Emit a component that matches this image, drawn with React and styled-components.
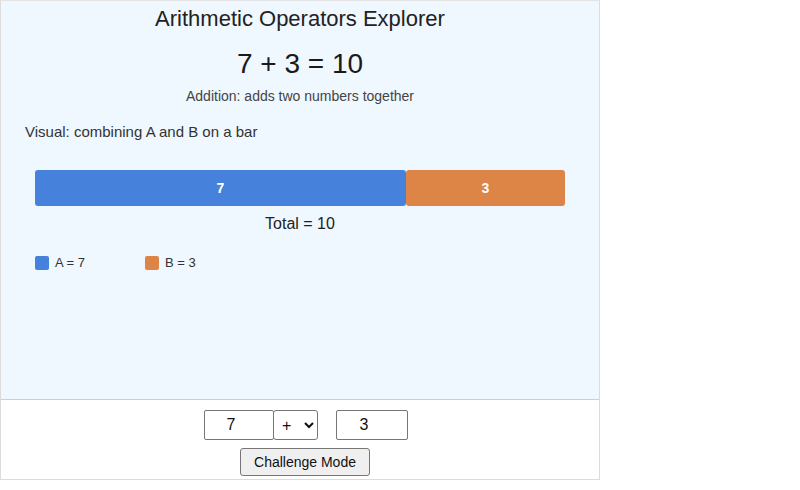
import React, { useState } from "react";
import styled, { createGlobalStyle } from "styled-components";

const Global = createGlobalStyle`
  html, body { margin: 0; padding: 0; background: #ffffff; }
  body { font-family: "Liberation Sans", Arial, Helvetica, sans-serif; color: #222; }
  * { box-sizing: border-box; }
`;

const Frame = styled.div`
  width: 600px;
  border: 1px solid #dcdcdc;
  border-top-color: #e4e4e4;
  display: flex;
  flex-direction: column;
`;

const Stage = styled.div`
  height: 399px;
  background: #eff7ff;
  border-bottom: 1px solid #cfcfcf;
  display: flex;
  flex-direction: column;
`;

const Title = styled.div`
  margin-top: 5px;
  font-size: 22px;
  line-height: 26px;
  text-align: center;
  color: #222;
`;

const Equation = styled.div`
  margin-top: 16px;
  font-size: 28px;
  line-height: 32px;
  text-align: center;
  color: #1a1a1a;
`;

const Description = styled.div`
  margin-top: 7px;
  font-size: 14px;
  line-height: 18px;
  text-align: center;
  color: #444;
`;

const Caption = styled.div`
  margin-top: 18px;
  padding-left: 24px;
  font-size: 15px;
  line-height: 18px;
  color: #333;
`;

const Bar = styled.div`
  margin: 29px 0 0 34px;
  width: 530px;
  height: 36px;
  display: flex;
`;

const Segment = styled.div`
  height: 100%;
  background: ${(p) => p.$color};
  border-radius: 3px;
  display: flex;
  align-items: center;
  justify-content: center;
  color: #fff;
  font-weight: bold;
  font-size: 14px;
`;

const Total = styled.div`
  margin-top: 8px;
  font-size: 16px;
  line-height: 20px;
  text-align: center;
  color: #222;
`;

const Legend = styled.div`
  margin: 22px 0 0 34px;
  display: flex;
`;

const LegendItem = styled.div`
  width: 110px;
  display: flex;
  align-items: center;
  gap: 6px;
  font-size: 13px;
  line-height: 14px;
  color: #333;
`;

const Swatch = styled.span`
  width: 14px;
  height: 14px;
  border-radius: 2px;
  background: ${(p) => p.$color};
`;

const Controls = styled.div`
  display: flex;
  flex-direction: column;
  align-items: center;
  gap: 8px;
  padding: 10px 0 3px 10px;
`;

const InputRow = styled.div`
  display: flex;
  align-items: center;
  margin-left: 2px;
`;

const NumberInput = styled.input`
  width: ${(p) => p.$w}px;
  height: 30px;
  border: 1px solid #767676;
  border-radius: 2px;
  background: #fff;
  font-family: "Liberation Sans", Arial, sans-serif;
  font-size: 16px;
  text-align: center;
  color: #111;
  padding: 0 18px 0 2px;
  margin: 0;
`;

const OpSelect = styled.select`
  width: 45px;
  height: 30px;
  margin: 0 18px 0 -1px;
  border: 1px solid #767676;
  border-radius: 3px;
  background: #fff;
  font-family: "Liberation Sans", Arial, sans-serif;
  font-size: 16px;
  color: #111;
  padding: 0 0 0 4px;
`;

const Button = styled.button`
  width: 130px;
  height: 28px;
  border: 1px solid #767676;
  border-radius: 3px;
  background: #efefef;
  font-family: "Liberation Sans", Arial, sans-serif;
  font-size: 14px;
  color: #111;
  padding: 0;
`;

export default function App() {
  const [a, setA] = useState("7");
  const [b, setB] = useState("3");
  const [op, setOp] = useState("+");
  const av = Number(a) || 0;
  const bv = Number(b) || 0;
  const total = av + bv;
  const wa = total ? (av / total) * 530 : 265;
  return (
    <>
      <Global />
      <Frame>
        <Stage>
          <Title>Arithmetic Operators Explorer</Title>
          <Equation>
            {av} {op} {bv} = {total}
          </Equation>
          <Description>Addition: adds two numbers together</Description>
          <Caption>Visual: combining A and B on a bar</Caption>
          <Bar>
            <Segment $color="#4682dc" style={{ width: wa }}>{av}</Segment>
            <Segment $color="#dd8447" style={{ width: 530 - wa }}>{bv}</Segment>
          </Bar>
          <Total>Total = {total}</Total>
          <Legend>
            <LegendItem>
              <Swatch $color="#4682dc" />A = {av}
            </LegendItem>
            <LegendItem>
              <Swatch $color="#dd8447" />B = {bv}
            </LegendItem>
          </Legend>
        </Stage>
        <Controls>
          <InputRow>
            <NumberInput $w={70} value={a} onChange={(e) => setA(e.target.value)} />
            <OpSelect value={op} onChange={(e) => setOp(e.target.value)}>
              <option>+</option>
              <option>-</option>
              <option>×</option>
              <option>÷</option>
            </OpSelect>
            <NumberInput $w={72} value={b} onChange={(e) => setB(e.target.value)} />
          </InputRow>
          <Button>Challenge Mode</Button>
        </Controls>
      </Frame>
    </>
  );
}
